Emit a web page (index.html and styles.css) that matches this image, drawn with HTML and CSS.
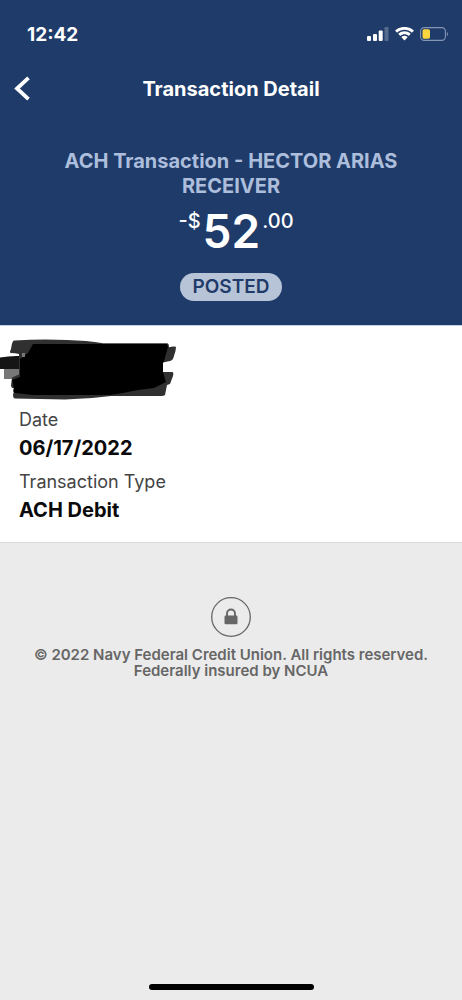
FILE: index.html
```html
<!DOCTYPE html>
<html lang="en">
<head>
<meta charset="utf-8">
<meta name="viewport" content="width=device-width, initial-scale=1">
<title>Transaction Detail</title>
<link rel="stylesheet" href="styles.css">
</head>
<body>
<header class="hero">
  <div class="status-bar">
    <time class="clock">12:42</time>
    <div class="indicators">
      <svg class="signal" width="22" height="14" viewBox="0 0 22 14" role="img" aria-label="Signal">
        <rect x="0" y="9" width="4" height="5" rx="1"/>
        <rect x="6" y="7" width="4" height="7" rx="1"/>
        <rect x="11.700" y="3.500" width="4" height="10.500" rx="1"/>
        <rect x="17.500" y="0" width="4" height="14" rx="1" opacity=".25"/>
      </svg>
      <svg class="wifi" width="19" height="14" viewBox="0.500 0.500 19 13.500" role="img" aria-label="Wi-Fi">
        <path d="M10 2.900c2.700 0 5.200 1 7.100 2.800.1.100.4.100.5 0l1.500-1.500c.2-.2.2-.4 0-.6C14-1 6-1 .9 3.600c-.2.200-.2.400 0 .6l1.500 1.500c.1.100.4.100.5 0C4.800 3.900 7.300 2.900 10 2.900z"/>
        <path d="M10 7.400c1.500 0 2.800.5 3.900 1.500.2.100.4.100.5 0l1.500-1.500c.2-.2.200-.4 0-.6-3.300-3.100-8.500-3.100-11.800 0-.2.200-.2.400 0 .6l1.500 1.500c.1.100.4.100.5 0 1.100-1 2.500-1.500 3.900-1.500z"/>
        <path d="M12.900 10.100c.2.200.2.400 0 .6l-2.600 2.700c-.2.200-.4.200-.6 0l-2.600-2.700c-.2-.2-.2-.4 0-.6 1.700-1.400 4.100-1.400 5.800 0z"/>
      </svg>
      <svg class="battery" width="29" height="14" viewBox="0 0 29 14" role="img" aria-label="Battery">
        <rect x=".6" y=".6" width="24.800" height="12.800" rx="3.600" fill="none" stroke="#8495b5" stroke-width="1.100"/>
        <rect x="2.500" y="2.300" width="7.500" height="9.400" rx="1.600" fill="#fdd53c"/>
        <path d="M26.800 5v4.200c1.600-.6 1.600-3.600 0-4.200z" fill="#8495b5"/>
      </svg>
    </div>
  </div>
  <nav class="nav-bar">
    <button class="back" type="button" aria-label="Back">
      <svg width="18" height="26" viewBox="0 0 18 26"><path d="M15.500 1.800 4 12.500l11.500 10.700" fill="none" stroke="currentColor" stroke-width="3.800"/></svg>
    </button>
    <h1 class="title">Transaction Detail</h1>
  </nav>
  <section class="summary">
    <h2 class="payee">ACH Transaction - HECTOR ARIAS RECEIVER</h2>
    <p class="amount"><span class="small">-$</span><span class="whole">52</span><span class="small">.00</span></p>
    <span class="badge">POSTED</span>
  </section>
</header>
<main class="details">
  <svg class="scribble" width="178" height="62" viewBox="0 0 178 62" aria-hidden="true">
    <path d="M4 31h16v10H4z" fill="#777"/>
    <path d="M0 19.500q10-2 21-1.500v13H0z" fill="#151515"/>
    <path d="M15 2.500Q40 1 67 2q20 .5 36 3.300l64 0q2 0 2 4 4-1.500 7-.5 0 4-2 9-1 5-4 5.200l-7 1.500V34h9q2 0 1 4l-3 8-3 1-2 10q-1 1-4 1l-50 0q-22 3-46 3.500l-50-1q-2 0-2-4l2-6q-4 0-4-3l1-8 7-3V16q-4-1-8-1-2 0 0-4 1-8 3-8.500z" fill="#303030"/>
    <path d="M33 6h134l1 3-4 14-1 2v9l3 10-12 6-16 2q-14 3-28 5H33l-18-2q-3-1-1-5l-2-8 8-3V21l8-6z" fill="#000"/>
    <path d="M22 15h3v4h-3z" fill="#777"/>
  </svg>
  <dl class="fields">
    <div class="field"><dt>Date</dt><dd>06/17/2022</dd></div>
    <div class="field"><dt>Transaction Type</dt><dd>ACH Debit</dd></div>
  </dl>
</main>
<footer class="footer">
  <svg class="lock" width="40" height="40" viewBox="0 0 40 40" role="img" aria-label="Secure">
    <circle cx="20" cy="20" r="19.300" fill="none" stroke="#666" stroke-width="1.300"/>
    <rect x="13.500" y="18.500" width="13" height="8.800" rx="1.200" fill="#666"/>
    <path d="M16 19.500v-3a4 4 0 0 1 8 0v3" fill="none" stroke="#666" stroke-width="1.900"/>
  </svg>
  <p class="legal">© 2022 Navy Federal Credit Union. All rights reserved.<br>Federally insured by NCUA</p>
  <div class="home-indicator"></div>
</footer>
</body>
</html>
```
FILE: styles.css
```css
* { box-sizing: border-box; }

body {
  margin: 0;
  min-height: 100vh;
  display: flex;
  flex-direction: column;
  background: #ebebeb;
  color: #0a0a0a;
  font-family: Inter, "Liberation Sans", sans-serif;
}

h1, h2, p, dl, dd { margin: 0; }

.hero {
  background: #1e3b69;
  color: #fff;
  border-bottom: 1px solid #c3d0e8;
}

.status-bar {
  display: flex;
  align-items: center;
  justify-content: space-between;
  height: 64px;
  padding: 4px 13px 0 27px;
}

.clock { font-size: 19px; font-weight: 700; }

.indicators { display: flex; align-items: center; gap: 6px; }
.signal, .wifi { fill: #fff; }

.nav-bar {
  display: grid;
  grid-template-columns: 44px 1fr 44px;
  align-items: center;
  height: 50px;
}

.back {
  display: flex;
  padding: 0 0 0 13px;
  border: 0;
  background: none;
  color: #fff;
}

.title {
  text-align: center;
  font-size: 20px;
  font-weight: 700;
  line-height: 28px;
}

.summary {
  display: flex;
  flex-direction: column;
  align-items: center;
  padding: 35px 48px 24px;
}

.payee {
  color: #adbedc;
  font-size: 20px;
  font-weight: 700;
  line-height: 25px;
  text-align: center;
}

.amount {
  display: flex;
  align-items: flex-start;
  gap: 2px;
  margin: 4px 0 14px;
  padding-left: 10px;
  font-weight: 500;
}

.whole { font-size: 46px; font-weight: 600; line-height: 56px; }
.small { font-size: 20px; line-height: 36px; }

.badge {
  padding: 0 13px;
  border-radius: 14px;
  background: #b7c3d7;
  color: #1e3b69;
  font-size: 19px;
  font-weight: 600;
  line-height: 28px;
}

.details {
  background: #fff;
  padding: 12px 0 18px;
  border-bottom: 1px solid #dcdcdc;
}

.scribble { display: block; }

.fields {
  display: grid;
  gap: 6px;
  padding: 6px 19px 0;
  line-height: 28px;
}

.field dt { font-size: 18px; color: #444; }
.field dd { font-size: 20px; font-weight: 700; }

.footer {
  flex: 1;
  display: flex;
  flex-direction: column;
  align-items: center;
  padding: 54px 16px 10px;
  color: #666;
}

.legal {
  margin-top: 10px;
  font-size: 15px;
  font-weight: 600;
  line-height: 16px;
  text-align: center;
}

.home-indicator {
  width: 165px;
  height: 6px;
  margin-top: auto;
  border-radius: 3px;
  background: #000;
}
```
